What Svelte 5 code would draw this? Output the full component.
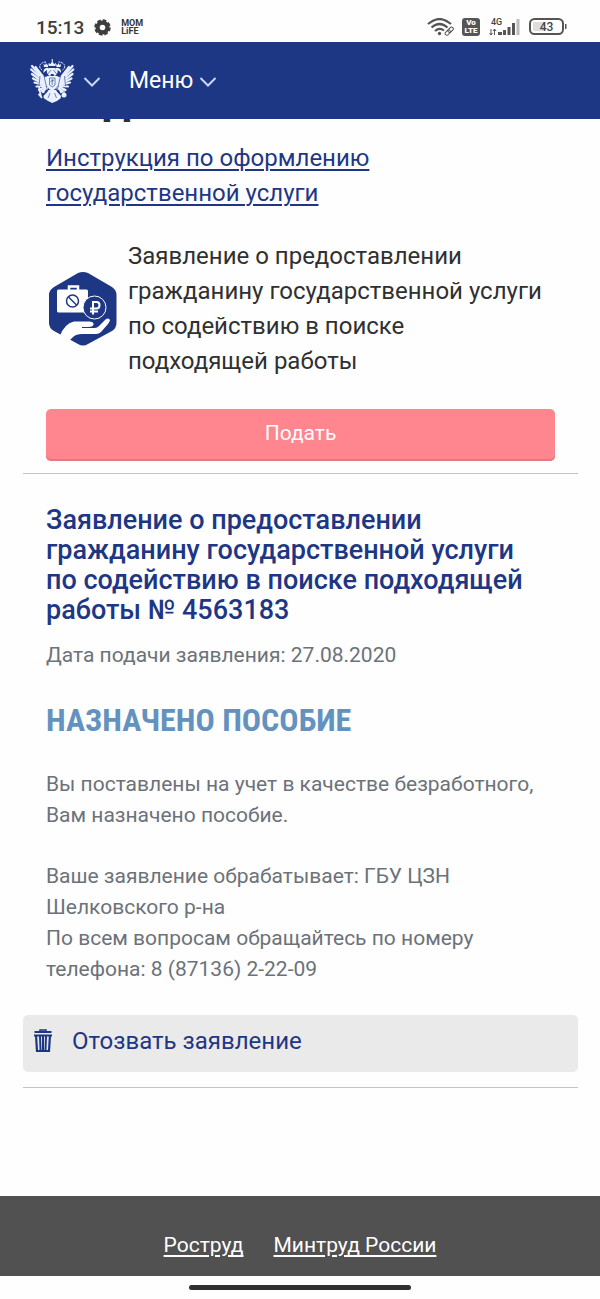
<script>
  const feathers = [
    "M14 21 L2 7", "M14 22 L1.200 10.500", "M14 24 L2 15", "M14 25 L3 19.500",
    "M14 26 L4.500 23.500", "M14 27 L6.500 27.500", "M15 28 L9 31", "M14 19 L5.500 8"
  ];
  const phone = "8 (87136) 2-22-09";
</script>

<div class="page">
  <div class="status">
    <div class="side">
      <span class="time">15:13</span>
      <svg width="17" height="17" viewBox="0 0 18 18">
        <circle cx="9" cy="9" r="5.2" fill="none" stroke="#3d3d3d" stroke-width="4.500" />
        <circle cx="9" cy="9" r="7.4" fill="none" stroke="#3d3d3d" stroke-width="2.6" stroke-dasharray="3.8 2.01" />
      </svg>
      <span class="mom">MOM<br />LiFE</span>
    </div>
    <div class="side right">
      <svg width="27" height="18" viewBox="0 0 27 18" fill="none" stroke="#555" stroke-width="2.2">
        <path d="M1 6 Q12.5 -4 24 6" />
        <path d="M4.5 9.5 Q12.5 2.5 20.500 9.5" />
        <path d="M8 13 Q12.500 9 17 12.500" />
        <circle cx="12.500" cy="15.500" r="1.700" fill="#555" stroke="none" />
        <g stroke-width="1" transform="rotate(-45 22 13)">
          <rect x="17" y="11.500" width="6" height="3.500" rx="1.700" />
          <rect x="21" y="11.500" width="6" height="3.500" rx="1.700" />
        </g>
      </svg>
      <span class="volte">Vo<br />LTE</span>
      <svg class="signal" width="33" height="20" viewBox="0 0 33 20">
        <text x="3" y="8" font-size="9" font-weight="500" fill="#444">4G</text>
        <path d="M3 12 V18 M1.500 16 L3 18 L4.500 16 M6.500 18 V12 M5 14 L6.500 12 L8 14" fill="none" stroke="#555" />
        <path d="M10 18 V15 H14 V18 Z M15 13 H18 V18 H15 Z M19.500 10 H22.500 V18 H19.500 Z M24 6 H27 V18 H24 Z" fill="#555" />
        <path d="M28.500 2 H31.500 V18 H28.500 Z" fill="#bbb" />
      </svg>
      <svg width="39" height="18" viewBox="0 0 39 18">
        <rect x="1" y="1" width="33" height="15" rx="4.500" fill="#fff" stroke="#555" stroke-width="2" />
        <rect x="4" y="4" width="11" height="9" rx="1" fill="#ddd" />
        <path d="M36 6 H37.500 V11 H36 Z" fill="#555" />
        <text x="17.500" y="13" font-size="12" font-weight="500" fill="#444" text-anchor="middle">43</text>
      </svg>
    </div>
  </div>

  <header>
    <button class="nav" aria-label="Госуслуги">
      <svg width="45" height="44" viewBox="0 0 45 44" fill="#e9f0ff" stroke="#e9f0ff">
        {#each ["", "translate(44.500 0) scale(-1 1)"] as side}
          <g transform={side}>
            {#each feathers as d}
              <path {d} stroke-width="2.200" stroke-linecap="round" />
            {/each}
            <path d="M20 18 Q14 16 13 21 Q12 26 17 28" stroke="none" />
            <path d="M20 17 Q16 15 17 11 Q15 12 13.500 14 Q13 10 16 9 Q19 8 19.500 11 L21 16 Z" stroke="none" />
            <path d="M14 8 L13.500 5 L15 6 L16 4 L17 6 L18.500 5 L18 8 Z" stroke="none" />
            <path d="M12 11 Q9 9 10 6 Q12 3 16 3" fill="none" stroke-width="1" stroke-dasharray="2 0.700" />
            <path d="M18 29 Q14 29 13 34 M15 31 L11 32 M18 34 L14 38" fill="none" stroke-width="2.400" />
          </g>
        {/each}
        <path d="M19 7 L18.500 4 L20.500 5 L21.700 3 V0 H22.800 V3 L24 5 L26 4 L25.500 7 Z" stroke="none" />
        <path d="M19 9 H25.500 V15 H19 Z" stroke="none" />
        <path d="M17 17 H27.500 V27 Q26 30 22.200 32 Q18 30 17 27 Z" stroke="none" />
        <path d="M18.500 31 L26 31 L31 39 L27 42 L22.200 44 L18 42 L13.500 39 Z" stroke="none" />
        <path d="M9 28 L11 38 M8.500 35 L12 39" stroke-width="1.800" />
        <circle cx="34" cy="36" r="2.500" stroke="none" />
        <path d="M34 31 V35" stroke-width="1.200" />
        <g stroke="#1e3785" fill="none" stroke-width="0.600">
          <path d="M19.500 19 H25 V26 L22.200 28 L19.500 26 Z M22.200 20 V26 M20.500 22.500 L24 21" />
          <path d="M14 17 L17 30 M30.500 17 L27.500 30 M20 34 L18 39 M24.500 34 L26.500 39" />
          <path d="M17 16 L21 11 M27.500 16 L23.500 11 M10 17 L9 27 M34.500 17 L35.500 27" />
        </g>
      </svg>
      <svg class="chevron" width="18" height="12" viewBox="0 0 18 12"><path d="M1.500 3 L9 10.500 L16.500 3" /></svg>
    </button>
    <button class="nav menu">
      Меню
      <svg class="chevron" width="18" height="12" viewBox="0 0 18 12"><path d="M1.500 3 L9 10.500 L16.500 3" /></svg>
    </button>
  </header>

  <main>
    <div class="scrolled"><h1>д</h1></div>

    <section class="intro">
      <a class="guide" href="#guide">Инструкция по оформлению государственной услуги</a>
      <div class="service">
        <svg width="70" height="76" viewBox="0 0 70 76">
          <path d="M30 2 Q35 0 40 2 L64 16 Q68.500 19 68.500 24 V52 Q68.500 57 64 60 L40 73 Q35 76 30 73 L6 60 Q1 57 1 52 V24 Q1 19 6 16 Z" fill="#1e3785" />
          <path d="M21 19 V15.500 H30 V19" fill="none" stroke="#fff" stroke-width="2.500" />
          <rect x="9" y="18.500" width="31" height="23" rx="1.500" fill="#fff" />
          <circle cx="24.500" cy="30" r="6" fill="none" stroke="#1e3785" stroke-width="1.500" />
          <path d="M20.500 26 L28.500 34" stroke="#1e3785" stroke-width="1.500" />
          <circle cx="46.500" cy="36.500" r="11.500" fill="#1e3785" stroke="#fff" />
          <path d="M45 43.500 V31 H48.500 Q51.500 31 51.500 34 Q51.500 37.500 48.500 37.500 H42 M42 40.500 H50" fill="none" stroke="#fff" stroke-width="2" />
          <path d="M12 65 Q16 53 26 50.500 H42 Q46 51 45.500 53.500 Q45 56 40 56 H34 V57 H47 Q49 57 51 55 L58 48 Q61 46.500 62 49 Q62 50 60 53 L53 61 Q51 63 48 63 H34 Q28 63 25 66 L21 70 Z" fill="#fff" />
        </svg>
        <p>Заявление о предоставлении гражданину государственной услуги по содействию в поиске подходящей работы</p>
      </div>
      <button class="apply">Подать</button>
    </section>

    <hr />

    <section class="request">
      <h2>Заявление о предоставлении гражданину государственной услуги по содействию в поиске подходящей работы № 4563183</h2>
      <p>Дата подачи заявления: 27.08.2020</p>
      <h3>НАЗНАЧЕНО ПОСОБИЕ</h3>
      <p>Вы поставлены на учет в качестве безработного, Вам назначено пособие.</p>
      <p class="office">
        Ваше заявление обрабатывает: ГБУ ЦЗН Шелковского р-на<br />
        По всем вопросам обращайтесь по номеру телефона: {phone}
      </p>
    </section>

    <button class="withdraw">
      <svg width="20" height="24" viewBox="0 0 20 24" fill="none" stroke="#1e3785">
        <path d="M7 3 V1 H13 V3" stroke-width="1.500" />
        <path d="M1.500 3 H18.500" stroke-width="2" />
        <path d="M1 6.500 H19" stroke-width="2" />
        <path d="M3 6 L4 22 H16 L17 6" stroke-width="2.200" />
        <path d="M7 7 L7.500 21 M10 7 V21 M13 7 L12.500 21" stroke-width="2" />
      </svg>
      Отозвать заявление
    </button>
    <hr />
  </main>

  <footer>
    <a href="#rostrud">Роструд</a>
    <a href="#mintrud">Минтруд России</a>
  </footer>
  <div class="gesture"><span></span></div>
</div>

<style>
  :global(body) {
    background: #fefefe;
  }
  .page {
    font-family: Roboto, sans-serif;
    color: #303030;
  }
  button {
    font-family: inherit;
    border: 0;
    cursor: pointer;
  }
  h1, h2, h3, p {
    margin: 0;
  }
  svg {
    flex-shrink: 0;
  }

  .status {
    display: flex;
    justify-content: space-between;
    align-items: center;
    box-sizing: border-box;
    height: 42px;
    padding: 12px 32px 0 36px;
  }
  .side {
    display: flex;
    align-items: center;
    gap: 10px;
  }
  .right {
    gap: 8px;
  }
  .time {
    font-size: 19px;
    font-weight: 500;
    color: #3d3d3d;
  }
  .mom {
    font-size: 9px;
    line-height: 8px;
    font-weight: 700;
    color: #333;
  }
  .volte {
    width: 18px;
    padding: 1px 0;
    border-radius: 3px;
    background: #555;
    color: #fff;
    font-size: 8px;
    line-height: 8px;
    font-weight: 900;
    text-align: center;
  }

  header {
    display: flex;
    align-items: center;
    gap: 28px;
    height: 77px;
    padding: 0 30px;
    background: #1e3785;
  }
  .nav {
    display: flex;
    align-items: center;
    gap: 8px;
    padding: 0;
    background: none;
    color: #fff;
    font-size: 23px;
  }
  .menu {
    gap: 6px;
  }
  .chevron {
    fill: none;
    stroke: #c9d8ff;
    stroke-width: 2;
  }

  main {
    padding: 0 22px 0 23px;
  }
  .scrolled {
    display: flex;
    align-items: flex-end;
    height: 4px;
    padding-left: 80px;
    overflow: hidden;
  }
  h1 {
    font-size: 44px;
    line-height: 46px;
    font-weight: 700;
  }
  .intro {
    padding: 18px 23px 12px;
    font-size: 24px;
    line-height: 35px;
  }
  .guide {
    display: block;
    max-width: 360px;
    color: #1e3785;
    text-decoration-thickness: 2px;
    text-underline-offset: 3px;
  }
  .service {
    display: flex;
    align-items: center;
    gap: 10px;
    padding: 28px 0 30px 2px;
  }
  .service p {
    max-width: 418px;
  }
  .apply {
    display: block;
    width: 100%;
    height: 52px;
    padding: 0 0 4px;
    border-radius: 5px;
    background: #ff858f;
    box-shadow: inset 0 -2px #e07a84;
    color: #fff;
    font-size: 21px;
  }
  hr {
    margin: 0;
    border: 0;
    border-top: 1px solid #c4c4c4;
  }

  .request {
    padding: 31px 23px 30px;
    color: #6c727a;
    font-size: 21px;
    line-height: 31px;
  }
  h2 {
    max-width: 490px;
    margin-bottom: 15px;
    color: #1e3785;
    font-size: 27px;
    line-height: 30px;
    font-weight: 500;
  }
  h3 {
    margin: 25px 0;
    color: #6492bf;
    font-family: "Roboto Condensed", Roboto, sans-serif;
    font-size: 32px;
    line-height: 48px;
    font-weight: 700;
  }
  .office {
    margin-top: 30px;
  }

  .withdraw {
    display: flex;
    align-items: center;
    gap: 19px;
    width: 100%;
    height: 57px;
    margin-bottom: 15px;
    padding: 0 10px 5px;
    border-radius: 5px;
    background: #eaeaea;
    color: #1e3785;
    font-size: 24px;
  }

  footer {
    display: flex;
    justify-content: center;
    gap: 30px;
    margin-top: 108px;
    padding: 34px 0 16px;
    background: #515151;
    font-size: 21px;
    line-height: 30px;
  }
  footer a {
    color: #fff;
    text-underline-offset: 3px;
  }
  .gesture {
    display: flex;
    justify-content: center;
    padding: 9px 0;
  }
  .gesture span {
    width: 37%;
    height: 5px;
    border-radius: 3px;
    background: #303030;
  }
</style>
